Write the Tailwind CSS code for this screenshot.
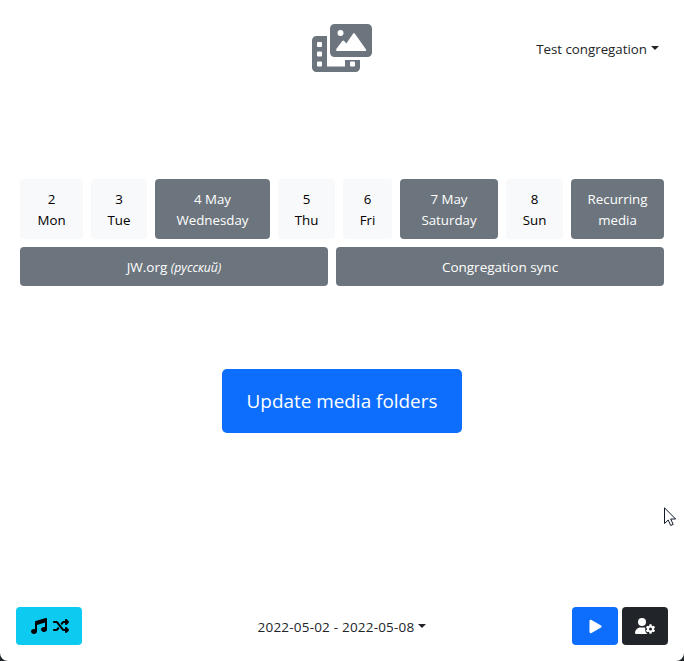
<!DOCTYPE html>
<html lang="en">
<head>
<meta charset="utf-8">
<title>Media folders</title>
<script src="https://cdn.jsdelivr.net/npm/@tailwindcss/browser@4"></script>
</head>
<body class="bg-[#212529]">
<div class="relative flex h-[661px] w-[684px] flex-col overflow-hidden rounded-b-[8px] bg-white font-['Open_Sans','Noto_Sans',sans-serif] text-[13.3px] leading-[21px] text-[#212529]">
  <header class="grid h-[96px] grid-cols-3 items-center px-[25px]">
    <span></span>
    <svg class="h-12 w-[60px] justify-self-center" viewBox="0 0 60 48" fill="#6c757d">
      <path fill-rule="evenodd" d="M22.500 0H55.500A4.500 4.500 0 0 1 60 4.500V28.500A4.500 4.500 0 0 1 55.500 33H22.500A4.500 4.500 0 0 1 18 28.500V4.500A4.500 4.500 0 0 1 22.500 0ZM28.500 6A3 3 0 1 0 28.500 12A3 3 0 1 0 28.500 6ZM42.700 9.600Q42 8.600 41.200 9.600L34.300 19.600L32.200 17Q31.200 16 30.300 17L24.300 25Q23.400 27 25.200 27H52.600Q55 27 53.700 25Z"/>
      <path fill-rule="evenodd" d="M4.500 12H15V42.500H33V36H48V43.500A4.500 4.500 0 0 1 43.500 48H4.500A4.500 4.500 0 0 1 0 43.500V16.500A4.500 4.500 0 0 1 4.500 12ZM6 18Q5 18 5 19V22Q5 23 6 23H9Q10 23 10 22V19Q10 18 9 18ZM6 27.500Q5 27.500 5 28.500V31.500Q5 32.500 6 32.500H9Q10 32.500 10 31.500V28.500Q10 27.500 9 27.500ZM6 37.500Q5 37.500 5 38.500V41.500Q5 42.500 6 42.500H9Q10 42.500 10 41.500V38.500Q10 37.500 9 37.500ZM39 37.500Q38 37.500 38 38.500V41.500Q38 42.500 39 42.500H42Q43 42.500 43 41.500V38.500Q43 37.500 42 37.500Z"/>
    </svg>
    <div class="flex items-center gap-1 justify-self-end pt-[2px]">
      <span class="whitespace-nowrap">Test congregation</span>
      <svg class="mb-[3px] h-1 w-2" viewBox="0 0 8 4" fill="#212529"><path d="M0 0H8L4 4Z"/></svg>
    </div>
  </header>

  <main class="flex flex-col px-5 pt-[83px]">
    <div class="grid h-[60px] grid-cols-[63px_56px_115px_57px_49px_98px_57px_93px] gap-2 text-center">
      <div class="rounded-[4px] bg-[#f8f9fa] pt-[10px] text-black">2<br>Mon</div>
      <div class="rounded-[4px] bg-[#f8f9fa] pt-[10px] text-black">3<br>Tue</div>
      <div class="rounded-[4px] bg-[#6c757d] pt-[10px] text-white">4 May<br>Wednesday</div>
      <div class="rounded-[4px] bg-[#f8f9fa] pt-[10px] text-black">5<br>Thu</div>
      <div class="rounded-[4px] bg-[#f8f9fa] pt-[10px] text-black">6<br>Fri</div>
      <div class="rounded-[4px] bg-[#6c757d] pt-[10px] text-white">7 May<br>Saturday</div>
      <div class="rounded-[4px] bg-[#f8f9fa] pt-[10px] text-black">8<br>Sun</div>
      <div class="rounded-[4px] bg-[#6c757d] pt-[10px] text-white">Recurring<br>media</div>
    </div>
    <div class="mt-2 grid h-[39px] grid-cols-[308px_328px] gap-2 text-center text-[13.5px] text-white">
      <div class="rounded-[4px] bg-[#6c757d] pt-[10px]">JW.org <i class="text-[12.2px]">(русский)</i></div>
      <div class="rounded-[4px] bg-[#6c757d] pt-[10px]">Congregation sync</div>
    </div>
    <button class="mt-[83px] h-16 w-[240px] self-center whitespace-nowrap rounded-[5px] bg-[#0d6efd] text-[18.9px] text-white">Update media folders</button>
  </main>

  <footer class="mt-auto mb-4 flex h-[38px] items-center justify-between px-4">
    <div class="flex w-24">
      <button class="flex h-[38px] w-[66px] items-center justify-center gap-[6px] rounded-[4px] bg-[#0dcaf0] pl-[2px]">
        <svg class="size-4" viewBox="0 0 512 512" fill="#000"><path d="M499.1 6.3c8.1 6 12.9 15.600 12.900 25.700v72V368c0 44.200-43 80-96 80s-96-35.800-96-80s43-80 96-80c11.200 0 22 1.600 32 4.600V147L192 223.800V432c0 44.200-43 80-96 80s-96-35.800-96-80s43-80 96-80c11.200 0 22 1.600 32 4.600V128c0-14.100 9.300-26.600 22.800-30.700l320-96c9.700-2.900 20.200-1.100 28.300 5z"/></svg>
        <svg class="size-4" viewBox="0 0 512 512" fill="#000"><path d="M403.8 34.4c12-5 25.700-2.200 34.900 6.900l64 64c6 6 9.400 14.100 9.400 22.600s-3.400 16.600-9.400 22.600l-64 64c-9.200 9.200-22.900 11.900-34.900 6.900s-19.800-16.600-19.800-29.600V160H352c-10.100 0-19.600 4.700-25.600 12.800L284 229.300 244 176l31.200-41.600C293.300 110.200 321.800 96 352 96h32V64c0-12.900 7.800-24.600 19.800-29.600zM164 282.700L204 336l-31.200 41.600C154.700 401.800 126.200 416 96 416H32c-17.700 0-32-14.300-32-32s14.300-32 32-32H96c10.100 0 19.600-4.700 25.600-12.800L164 282.700zm274.600 188c-9.200 9.200-22.900 11.900-34.900 6.900s-19.800-16.600-19.800-29.600V416H352c-30.200 0-58.700-14.200-76.800-38.400L121.600 172.800c-6-8.100-15.500-12.800-25.600-12.800H32c-17.700 0-32-14.300-32-32s14.300-32 32-32H96c30.200 0 58.700 14.200 76.800 38.400L326.400 339.200c6 8.100 15.500 12.800 25.600 12.800h32V320c0-12.900 7.800-24.600 19.800-29.600s25.700-2.200 34.900 6.900l64 64c6 6 9.400 14.100 9.400 22.600s-3.400 16.600-9.400 22.600l-64 64z"/></svg>
      </button>
    </div>
    <div class="flex items-center gap-1 pt-[2px]">
      <span class="whitespace-nowrap text-[13.5px] tracking-[0.2px]">2022-05-02 - 2022-05-08</span>
      <svg class="mb-[3px] h-1 w-2" viewBox="0 0 8 4" fill="#212529"><path d="M0 0H8L4 4Z"/></svg>
    </div>
    <div class="flex w-24 gap-1">
      <button class="flex h-[38px] w-[46px] items-center justify-center rounded-[4px] bg-[#0d6efd]">
        <svg class="h-[15px] w-[13px]" viewBox="0 0 14 16" fill="#fff"><path d="M.5 2.300C.5 1 1.700.5 2.700 1.100L13 7Q14.100 8 13 9L2.700 14.900C1.700 15.500.5 15 .5 13.700Z"/></svg>
      </button>
      <button class="flex h-[38px] w-[46px] items-center justify-center rounded-[4px] bg-[#212529]">
        <svg class="h-4 w-5" viewBox="0 0 20 16" fill="#fff">
          <circle cx="7" cy="4" r="4"/>
          <path d="M5.500 9.500H8.500C9.200 9.500 9.800 9.600 10.400 9.900C9.700 12.200 10.600 14.600 12.600 16H1Q0 16 0 15C0 12 2.500 9.500 5.500 9.500Z"/>
          <path fill-rule="evenodd" d="M14.500 6.300H16.500L16.800 7.700L17.700 8.200L19 7.800L20 9.500L19 10.500V11.500L20 12.500L19 14.200L17.700 13.800L16.800 14.300L16.500 15.700H14.500L14.200 14.300L13.300 13.800L12 14.200L11 12.500L12 11.500V10.500L11 9.500L12 7.800L13.300 8.200L14.200 7.700ZM15.500 9.500A1.500 1.500 0 1 0 15.500 12.500A1.500 1.500 0 1 0 15.500 9.500Z"/>
        </svg>
      </button>
    </div>
  </footer>

  <svg class="absolute left-[664px] top-[507px] h-[20px] w-[13px]" viewBox="0 0 13 20" fill="#fff" stroke="#111827"><path d="M.5.8V16.500L4.200 13L6.700 18.500L9.200 17.400L6.700 12H11.600Z"/></svg>
</div>
</body>
</html>
